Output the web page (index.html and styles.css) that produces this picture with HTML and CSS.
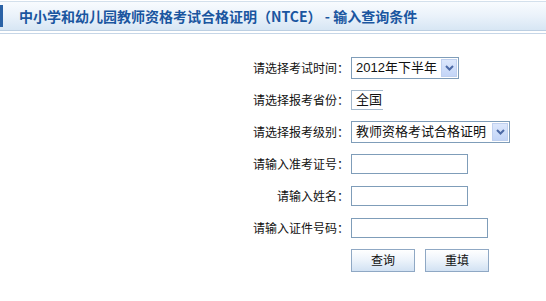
FILE: index.html
```html
<!DOCTYPE html>
<html lang="zh-CN">
<head>
<meta charset="utf-8">
<title>输入查询条件</title>
<link rel="stylesheet" href="styles.css">
</head>
<body>
<div class="header">
  <span class="header-bar"></span>
  <h1 class="title">中小学和幼儿园教师资格考试合格证明（NTCE） - 输入查询条件</h1>
</div>
<div class="rule"></div>
<form class="form">
  <label class="label">请选择考试时间：</label>
  <div class="field">
    <div class="select select-time"><span class="select-text">2012年下半年</span><span class="select-arrow"><svg width="9" height="6" viewBox="0 0 9 6"><path d="M1 1 L4.5 4.5 L8 1" fill="none" stroke="#4d6aa6" stroke-width="2"/></svg></span></div>
  </div>

  <label class="label">请选择报考省份：</label>
  <div class="field">
    <div class="clipbox"><span class="select-text">全国</span></div>
  </div>

  <label class="label">请选择报考级别：</label>
  <div class="field">
    <div class="select select-level"><span class="select-text">教师资格考试合格证明</span><span class="select-arrow"><svg width="9" height="6" viewBox="0 0 9 6"><path d="M1 1 L4.5 4.5 L8 1" fill="none" stroke="#4d6aa6" stroke-width="2"/></svg></span></div>
  </div>

  <label class="label">请输入准考证号：</label>
  <div class="field"><input class="input input-short" type="text"></div>

  <label class="label">请输入姓名：</label>
  <div class="field"><input class="input input-short" type="text"></div>

  <label class="label">请输入证件号码：</label>
  <div class="field"><input class="input input-long" type="text"></div>

  <span class="label"></span>
  <div class="field buttons">
    <button class="btn" type="button">查询</button>
    <button class="btn" type="button">重填</button>
  </div>
</form>
</body>
</html>
```

FILE: styles.css
```css
html, body {
  margin: 0;
  padding: 0;
  background: #ffffff;
}

body {
  font-family: "Noto Sans CJK SC", "Liberation Sans", sans-serif;
  font-size: 12px;
  color: #000;
}

.header {
  display: flex;
  align-items: center;
  height: 28px;
  margin-top: 1px;
  border-top: 1px solid #d3e0ec;
  border-bottom: 1px solid #bccfe2;
  background: linear-gradient(to bottom, #f8fbfe 0%, #eaf2fa 50%, #d7e6f4 100%);
}

.header-bar {
  width: 3px;
  height: 22px;
  background: #2a62a6;
  flex: none;
}

.title {
  margin: 0 0 0 16px;
  font-size: 14px;
  font-weight: bold;
  color: #1a56a0;
  line-height: 16px;
  white-space: nowrap;
  letter-spacing: 0;
}

.rule {
  height: 1px;
  margin-top: 2px;
  background: #c6d6e7;
}

.form {
  display: grid;
  grid-template-columns: 121px auto;
  grid-auto-rows: 32px;
  column-gap: 2px;
  align-items: center;
  margin: 18px 0 0 228px;
}

.label {
  text-align: right;
  white-space: nowrap;
  line-height: 14px;
  color: #111;
}

.field {
  display: flex;
  align-items: center;
}

.select {
  display: flex;
  align-items: center;
  justify-content: space-between;
  box-sizing: border-box;
  height: 22px;
  border: 1px solid #7f9db9;
  background: #fff;
  padding: 0 1px 0 4px;
  font-family: "Liberation Sans", "Noto Sans CJK SC", sans-serif;
  font-size: 13px;
}

.select-time { width: 108px; }
.select-level { width: 159px; }

.select-text {
  white-space: nowrap;
  line-height: 16px;
  color: #111;
}

.select-arrow {
  display: flex;
  align-items: center;
  justify-content: center;
  box-sizing: border-box;
  width: 16px;
  height: 18px;
  border: 1px solid #bfd0ef;
  background: linear-gradient(to bottom, #dce7fc 0%, #c3d5f7 100%);
}

.clipbox {
  display: flex;
  align-items: center;
  box-sizing: border-box;
  width: 32px;
  height: 20px;
  border: 1px solid #a5b9cc;
  border-right: none;
  padding-left: 4px;
  font-family: "Liberation Sans", "Noto Sans CJK SC", sans-serif;
  font-size: 13px;
}

.input {
  box-sizing: border-box;
  height: 20px;
  margin: 0;
  padding: 0 2px;
  border: 1px solid #7f9db9;
  background: #fff;
  font-size: 12px;
}

.input-short { width: 117px; }
.input-long { width: 137px; }

.buttons {
  gap: 10px;
}

.btn {
  box-sizing: border-box;
  width: 64px;
  height: 23px;
  margin: 0;
  padding: 0;
  border: 1px solid #8fa8c4;
  background: linear-gradient(to bottom, #ffffff 0%, #eef4fb 45%, #d2e2f3 100%);
  font-family: "Noto Sans CJK SC", sans-serif;
  font-size: 12px;
  line-height: 14px;
  color: #111;
}
```
